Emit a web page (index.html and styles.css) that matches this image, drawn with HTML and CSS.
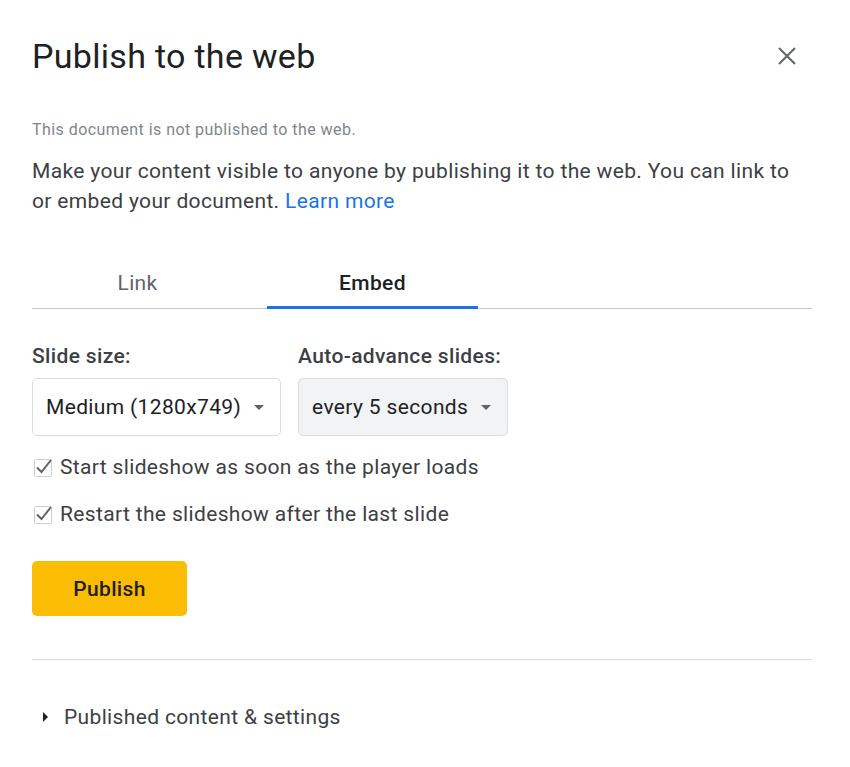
FILE: index.html
```html
<!DOCTYPE html>
<html lang="en">
<head>
    <meta charset="UTF-8">
    <title>Publish to the web</title>
    <link rel="stylesheet" href="styles.css">
</head>
<body>
    <div class="dialog">
        <div class="dialog-header">
            <h1 class="dialog-title">Publish to the web</h1>
            <button class="close-btn" type="button" aria-label="Close">
                <svg width="18" height="18" viewBox="0 0 18 18">
                    <path d="M1 1L17 17M17 1L1 17" stroke="#5f6368" stroke-width="2" fill="none"/>
                </svg>
            </button>
        </div>

        <p class="status">This document is not published to the web.</p>
        <p class="intro">Make your content visible to anyone by publishing it to the web. You can link to or embed your document. <a href="#" class="learn">Learn more</a></p>

        <div class="tabs">
            <div class="tab">Link</div>
            <div class="tab active">Embed</div>
        </div>

        <div class="options">
            <div class="field">
                <label class="field-label">Slide size:</label>
                <div class="select">
                    <span>Medium (1280x749)</span>
                    <span class="caret"></span>
                </div>
            </div>
            <div class="field">
                <label class="field-label">Auto-advance slides:</label>
                <div class="select grey">
                    <span>every 5 seconds</span>
                    <span class="caret"></span>
                </div>
            </div>
        </div>

        <div class="check-row">
            <svg class="check" width="22" height="22" viewBox="0 0 22 22">
                <rect x="1.5" y="4.5" width="17" height="17" rx="1" fill="none" stroke="#cfcfcf" stroke-width="1"/>
                <path d="M4 12.5L8.5 17L18 5" stroke="#5f6368" stroke-width="2" fill="none"/>
            </svg>
            <span>Start slideshow as soon as the player loads</span>
        </div>
        <div class="check-row">
            <svg class="check" width="22" height="22" viewBox="0 0 22 22">
                <rect x="1.5" y="4.5" width="17" height="17" rx="1" fill="none" stroke="#cfcfcf" stroke-width="1"/>
                <path d="M4 12.5L8.5 17L18 5" stroke="#5f6368" stroke-width="2" fill="none"/>
            </svg>
            <span>Restart the slideshow after the last slide</span>
        </div>

        <button class="publish-btn" type="button">Publish</button>

        <div class="divider"></div>

        <div class="disclosure">
            <span class="triangle"></span>
            <span>Published content &amp; settings</span>
        </div>
    </div>
</body>
</html>
```

FILE: styles.css
```css
body {
    margin: 0;
    padding: 0;
    background-color: #fff;
    font-family: Roboto, "Liberation Sans", Arial, sans-serif;
    font-size: 21px;
    letter-spacing: 0.35px;
    color: #3c4043;
}

.dialog {
    width: 780px;
    padding: 36px 38px 0 32px;
}

.dialog-header {
    display: flex;
    justify-content: space-between;
    align-items: center;
    height: 40px;
}

.dialog-title {
    margin: 0;
    font-size: 34px;
    font-weight: 400;
    line-height: 40px;
    letter-spacing: 0.3px;
    color: #202124;
}

.close-btn {
    background: none;
    border: none;
    padding: 0;
    margin-right: 16px;
    width: 18px;
    height: 18px;
    cursor: pointer;
}

.status {
    margin: 44px 0 0 0;
    font-size: 16px;
    line-height: 20px;
    letter-spacing: 0.45px;
    color: #80868b;
}

.intro {
    margin: 16px 0 0 0;
    line-height: 30px;
    color: #3c4043;
}

.learn {
    color: #1a73e8;
    text-decoration: none;
}

.tabs {
    display: flex;
    gap: 24px;
    margin-top: 52px;
    border-bottom: 1px solid #c6c6c6;
}

.tab {
    width: 211px;
    height: 38px;
    text-align: center;
    line-height: 30px;
    color: #5f6368;
    border-bottom: 3px solid transparent;
    margin-bottom: -1px;
}

.tab.active {
    color: #202124;
    font-weight: 500;
    border-bottom-color: #1a73e8;
}

.options {
    display: flex;
    gap: 17px;
    margin-top: 32px;
}

.field-label {
    display: block;
    font-weight: 500;
    line-height: 30px;
    color: #3c4043;
}

.select {
    display: flex;
    align-items: center;
    gap: 13px;
    margin-top: 7px;
    height: 56px;
    padding: 0 16px 0 13px;
    border: 1px solid #dadce0;
    border-radius: 5px;
    color: #202124;
}

.select.grey {
    background-color: #f1f3f4;
}

.caret {
    width: 0;
    height: 0;
    border-left: 5px solid transparent;
    border-right: 5px solid transparent;
    border-top: 5px solid #5f6368;
}

.check-row {
    display: flex;
    align-items: center;
    gap: 5px;
    height: 30px;
    color: #3c4043;
    margin-top: 16px;
}

.check-row + .check-row {
    margin-top: 17px;
}

.check {
    margin-left: 1px;
    margin-top: -2px;
}

.publish-btn {
    display: block;
    margin-top: 32px;
    width: 155px;
    height: 55px;
    border: none;
    border-radius: 5px;
    background-color: #fbbc04;
    font-family: Roboto, "Liberation Sans", Arial, sans-serif;
    font-size: 21px;
    font-weight: 500;
    letter-spacing: 0.35px;
    color: #202124;
    cursor: pointer;
}

.divider {
    margin-top: 43px;
    height: 1px;
    background-color: #dadce0;
}

.disclosure {
    display: flex;
    align-items: center;
    gap: 16px;
    margin-top: 42px;
    padding-left: 11px;
    line-height: 30px;
    color: #3c4043;
}

.triangle {
    width: 0;
    height: 0;
    border-top: 5px solid transparent;
    border-bottom: 5px solid transparent;
    border-left: 5px solid #202124;
}
```
